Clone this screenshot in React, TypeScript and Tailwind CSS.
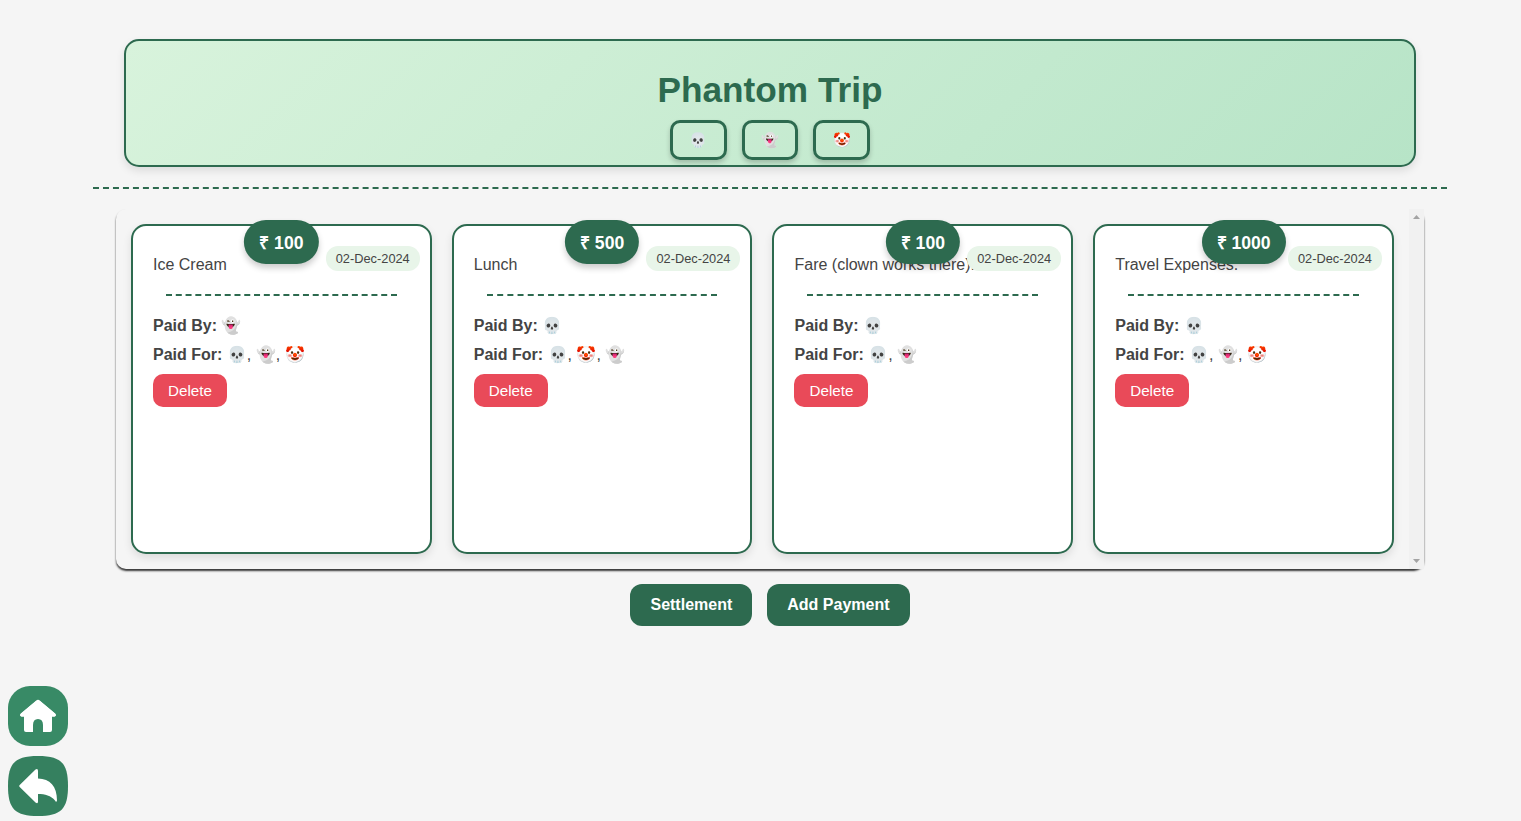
type Payment = { title: string; amount: string; paidBy: string; paidFor: string };

const payments: Payment[] = [
  { title: "Ice Cream", amount: "₹ 100", paidBy: "👻", paidFor: "💀, 👻, 🤡" },
  { title: "Lunch", amount: "₹ 500", paidBy: "💀", paidFor: "💀, 🤡, 👻" },
  { title: "Fare (clown works there).", amount: "₹ 100", paidBy: "💀", paidFor: "💀, 👻" },
  { title: "Travel Expenses.", amount: "₹ 1000", paidBy: "💀", paidFor: "💀, 👻, 🤡" },
];

function PaymentCard({ title, amount, paidBy, paidFor }: Payment) {
  return (
    <article className="relative min-w-0 flex-1 rounded-[15px] border-2 border-[#2d6a4f] bg-white p-5 text-[16px] leading-[18px] text-[#444] shadow-[0_4px_8px_rgba(0,0,0,0.1)]">
      <p className="mt-[10px] whitespace-nowrap">{title}</p>
      <div className="absolute left-1/2 top-[-6px] -translate-x-1/2 whitespace-nowrap rounded-[25px] bg-[#2d6a4f] px-[15px] pb-[9px] pt-[11px] text-[17.6px] font-bold leading-[24px] text-white shadow-[0_4px_6px_rgba(0,0,0,0.2)]">
        {amount}
      </div>
      <div className="absolute right-[10px] top-5 whitespace-nowrap rounded-[12px] bg-[#e8f5e9] px-[10px] py-[5px] text-[12.8px] leading-[15px]">
        02-Dec-2024
      </div>
      <div className="mx-[13px] mt-5 border-t-2 border-dashed border-[#2d6a4f]" />
      <p className="mt-5 whitespace-nowrap leading-[19px]"><strong>Paid By:</strong> {paidBy}</p>
      <p className="mt-[10px] whitespace-nowrap leading-[19px]"><strong>Paid For:</strong> {paidFor}</p>
      <button className="mt-[10px] block rounded-[10px] bg-[#e94a59] px-[15px] py-2 text-[15.2px] leading-[17px] text-white">Delete</button>
    </article>
  );
}

export default function App() {
  return (
    <div className="flex h-[821px] overflow-hidden bg-[#f5f5f5] font-['Liberation_Sans',Arial,sans-serif]">
      <nav className="flex w-[93px] shrink-0 flex-col justify-end gap-[10px] pb-[5px] pl-2">
        <button aria-label="Home" className="size-[60px] rounded-[22px] bg-[#388a66]">
          <svg viewBox="0 0 60 60" className="size-[60px]">
            <path d="M30 15.3 46.2 28.8M30 15.3 13.8 28.8" stroke="white" strokeWidth="3" strokeLinecap="round" />
            <path d="M28 14.8q2-1.5 4 0L47.2 27.5q2 2.8-1.2 3.2H44V44q0 2-2 2h-7v-7q0-6-5-6t-5 6v7h-7q-2 0-2-2V30.700h-2q-3.200-.4-1.200-3.200Z" fill="white" />
          </svg>
        </button>
        <button aria-label="Back" className="size-[60px]">
          <svg viewBox="0 0 60 60" className="size-[60px]">
            <path d="M30 0C53 0 60 7 60 30S53 60 30 60 0 53 0 30 7 0 30 0Z" fill="#35805f" />
            <path d="M27.500 13.500Q30 12 30 15v7.500C42 23 49 30 49 44.500q-.7 2.500-2 0C43 39.500 37 38 30 38v7.500q0 3-2.500 1L11.700 31q-1.200-1 0-2Z" fill="white" />
          </svg>
        </button>
      </nav>
      <main className="flex w-[1354px] flex-col items-center pt-[39px]">
        <header className="flex h-[128px] w-[1292px] flex-col items-center rounded-[15px] border-2 border-[#2d6a4f] bg-[linear-gradient(135deg,#d8f3dc,#b7e4c7)] pt-[29px] shadow-[0_4px_8px_rgba(0,0,0,0.1)]">
          <h1 className="text-[35.2px] font-bold leading-[40px] text-[#2d6a4f]">Phantom Trip</h1>
          <div className="mt-[10px] flex gap-[15px]">
            {["💀", "👻", "🤡"].map((m) => (
              <button key={m} className="flex h-10 w-[56.6px] items-center justify-center rounded-[10px] border-[3px] border-[#2d6a4f] text-[14.4px] font-bold leading-[18px] shadow-[0_3px_5px_rgba(0,0,0,0.2)]">{m}</button>
            ))}
          </div>
        </header>
        <div className="mt-5 w-full border-t-2 border-dashed border-[#2d6a4f]" />
        <section className="mt-5 flex h-[360px] w-[1308px] shrink-0 rounded-[10px] shadow-[0_2px_2px_rgba(0,0,0,0.78)]">
          <div className="flex flex-1 gap-5 py-[15px] pl-[15px] pr-[15.1px]">
            {payments.map((p) => <PaymentCard key={p.title} {...p} />)}
          </div>
          <div className="flex w-[15px] flex-col items-center justify-between bg-[#f1f1f1] py-[6px]">
            <svg viewBox="0 0 7 4" className="h-1 w-[7px]"><path d="M0 4 3.500 0 7 4Z" fill="#a3a3a3" /></svg>
            <svg viewBox="0 0 7 4" className="h-1 w-[7px]"><path d="M0 0H7L3.500 4Z" fill="#a3a3a3" /></svg>
          </div>
        </section>
        <div className="mt-[15px] flex gap-[15px] text-[16px] font-bold leading-[18px] text-white">
          <button className="rounded-[12px] bg-[#2d6a4f] px-5 py-3">Settlement</button>
          <button className="rounded-[12px] bg-[#2d6a4f] px-5 py-3">Add Payment</button>
        </div>
      </main>
    </div>
  );
}
